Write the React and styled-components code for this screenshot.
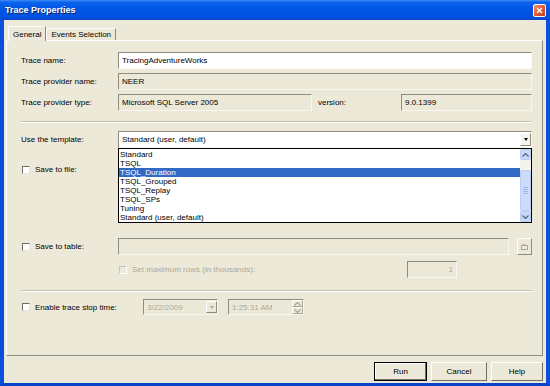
import styled, { createGlobalStyle } from "styled-components";

const GlobalStyle = createGlobalStyle`
  html, body {
    margin: 0;
    padding: 0;
    background: #ece9d8;
  }
  body {
    font-family: "Liberation Sans", Arial, sans-serif;
    font-size: 8px;
    color: #000;
  }
`;

const Window = styled.div`
  width: 550px;
  height: 386px;
  display: flex;
  flex-direction: column;
  background: #ece9d8;
  overflow: hidden;
`;

const TitleBar = styled.div`
  height: 20px;
  flex: none;
  display: flex;
  align-items: center;
  justify-content: space-between;
  padding: 0 4px 0 5px;
  background: linear-gradient(
    to bottom,
    #3d8bf7 0%,
    #0a62ec 12%,
    #0055e5 45%,
    #0052e0 85%,
    #0a45c8 100%
  );
`;

const TitleText = styled.span`
  color: #fff;
  font-size: 9px;
  font-weight: bold;
  text-shadow: 1px 1px 0 #0a246a;
`;

const CloseButton = styled.div`
  width: 13px;
  height: 13px;
  box-sizing: border-box;
  border: 1px solid #fff;
  border-radius: 2px;
  background: linear-gradient(135deg, #f0957a 0%, #e15a2f 50%, #c2401c 100%);
  display: flex;
  align-items: center;
  justify-content: center;
`;

const Body = styled.div`
  flex: 1;
  display: flex;
  flex-direction: column;
  border-left: 4px solid #0a50dc;
  border-right: 4px solid #0a50dc;
  border-bottom: 3px solid #0a45c8;
  padding: 6px 3px 0 2px;
  min-height: 0;
`;

const TabStrip = styled.div`
  height: 14px;
  flex: none;
  display: flex;
  align-items: flex-end;
  padding-left: 2px;
  position: relative;
  z-index: 1;
`;

const Tab = styled.div`
  box-sizing: border-box;
  height: ${(p) => (p.$active ? "15px" : "12px")};
  margin-bottom: ${(p) => (p.$active ? "-1px" : "0")};
  padding: 0 4px;
  display: flex;
  align-items: center;
  background: #ece9d8;
  border-left: 1px solid #fff;
  border-top: 1px solid #fff;
  border-right: 1px solid #8a877a;
  color: #000;
`;

const Panel = styled.div`
  flex: 1;
  display: flex;
  flex-direction: column;
  border: 1px solid;
  border-color: #fff #8f8d82 #8f8d82 #fff;
  padding: 11px 10px 0 14px;
  min-height: 0;
`;

const Row = styled.div`
  height: ${(p) => p.$h || 17}px;
  margin-top: ${(p) => p.$mt || 0}px;
  display: flex;
  align-items: center;
  flex: none;
`;

const Label = styled.div`
  width: ${(p) => p.$w || 97}px;
  flex: none;
  color: ${(p) => (p.$disabled ? "#aca899" : "#000")};
  white-space: nowrap;
`;

const Field = styled.div`
  box-sizing: border-box;
  height: 100%;
  width: ${(p) => (p.$w ? `${p.$w}px` : "auto")};
  flex: ${(p) => (p.$w ? "none" : "1")};
  display: flex;
  align-items: center;
  justify-content: ${(p) => (p.$right ? "flex-end" : "flex-start")};
  padding: 0 3px;
  background: ${(p) => (p.$white ? "#fff" : "#ece9d8")};
  color: ${(p) => (p.$grey ? "#aca899" : "#000")};
  border: 1px solid;
  border-color: #8f8d82 #f8f7f2 #f8f7f2 #8f8d82;
  position: relative;
  white-space: nowrap;
`;

const Separator = styled.div`
  height: 0;
  border-top: 1px solid #c5c2b2;
  border-bottom: 1px solid #fff;
  margin-top: ${(p) => p.$mt}px;
  flex: none;
`;

const ComboWrap = styled.div`
  flex: 1;
  height: 100%;
  position: relative;
`;

const DropButton = styled.div`
  position: absolute;
  right: 1px;
  top: 2px;
  bottom: 2px;
  width: 11px;
  box-sizing: border-box;
  background: ${(p) => (p.$disabled ? "#ece9d8" : "#f4f3ee")};
  border: 1px solid;
  border-color: #fff #8f8d82 #8f8d82 #fff;
  display: flex;
  align-items: center;
  justify-content: center;
`;

const Arrow = styled.div`
  width: 0;
  height: 0;
  border-left: 2.5px solid transparent;
  border-right: 2.5px solid transparent;
  border-top: 3px solid ${(p) => (p.$disabled ? "#aca899" : "#000")};
`;

const DropList = styled.div`
  position: absolute;
  top: 100%;
  left: 0;
  right: 0;
  height: 75px;
  box-sizing: border-box;
  background: #fff;
  border: 1px solid #000;
  display: flex;
  z-index: 5;
`;

const Items = styled.div`
  flex: 1;
  padding-top: 1px;
`;

const Item = styled.div`
  height: 9px;
  line-height: 9px;
  padding-left: 1px;
  background: ${(p) => (p.$selected ? "#316ac5" : "transparent")};
  color: ${(p) => (p.$selected ? "#fff" : "#000")};
  white-space: nowrap;
`;

const ScrollBar = styled.div`
  width: 11px;
  flex: none;
  display: flex;
  flex-direction: column;
  background: #f4f3ee;
`;

const ScrollBtn = styled.div`
  height: 11px;
  box-sizing: border-box;
  border: 1px solid #b9cdf8;
  border-radius: 2px;
  background: #c8d8fb;
  display: flex;
  align-items: center;
  justify-content: center;
  flex: none;
`;

const ScrollTrack = styled.div`
  flex: 1;
  display: flex;
  flex-direction: column;
  padding-top: 10px;
`;

const Thumb = styled.div`
  flex: 1;
  border: 1px solid #b9cdf8;
  border-radius: 2px;
  background: #cddbfb;
  display: flex;
  flex-direction: column;
  align-items: center;
  justify-content: center;
  gap: 1px;
`;

const Grip = styled.div`
  width: 5px;
  height: 1px;
  background: #9fb7ee;
`;

const Check = styled.div`
  width: 8px;
  height: 8px;
  box-sizing: border-box;
  flex: none;
  margin: 0 5px 0 1px;
  background: ${(p) => (p.$disabled ? "#ece9d8" : "#fff")};
  border: 1px solid;
  border-color: ${(p) =>
    p.$disabled ? "#c9c6b8 #fff #fff #c9c6b8" : "#6f6d64 #e8e6dc #e8e6dc #6f6d64"};
`;

const CheckLabel = styled.div`
  display: flex;
  align-items: center;
  width: ${(p) => (p.$w ? `${p.$w}px` : "auto")};
  flex: none;
  color: ${(p) => (p.$disabled ? "#aca899" : "#000")};
  white-space: nowrap;
`;

const SmallButton = styled.div`
  width: 15px;
  height: 100%;
  box-sizing: border-box;
  flex: none;
  margin-left: 8px;
  border: 1px solid;
  border-color: #fff #8f8d82 #8f8d82 #fff;
  display: flex;
  align-items: center;
  justify-content: center;
`;

const Spinner = styled.div`
  position: absolute;
  right: 1px;
  top: 1px;
  bottom: 1px;
  width: 11px;
  display: flex;
  flex-direction: column;
`;

const SpinHalf = styled.div`
  flex: 1;
  border: 1px solid;
  border-color: #fff #aca899 #aca899 #fff;
  display: flex;
  align-items: center;
  justify-content: center;
`;

const Footer = styled.div`
  height: 19px;
  flex: none;
  display: flex;
  justify-content: flex-end;
  gap: 4px;
  padding: 6px 0 2px;
`;

const Button = styled.div`
  width: ${(p) => p.$w}px;
  box-sizing: border-box;
  display: flex;
  align-items: center;
  justify-content: center;
  background: #ece9d8;
  border: 1px solid;
  border-color: #fff #6f6d64 #6f6d64 #fff;
  outline: ${(p) => (p.$default ? "1px solid #000" : "none")};
  outline-offset: -1px;
  box-shadow: ${(p) =>
    p.$default ? "inset -1px -1px 0 #6f6d64, inset 1px 1px 0 #fff" : "none"};
`;

const templates = [
  "Standard",
  "TSQL",
  "TSQL_Duration",
  "TSQL_Grouped",
  "TSQL_Replay",
  "TSQL_SPs",
  "Tuning",
  "Standard (user, default)",
];

const TinyArrow = ({ up, color = "#4d6185" }) => (
  <svg width="7" height="4" viewBox="0 0 7 4">
    <path
      d={up ? "M0.5 3.5 L3.5 0.5 L6.5 3.5" : "M0.5 0.5 L3.5 3.5 L6.5 0.5"}
      fill="none"
      stroke={color}
      strokeWidth="1.2"
    />
  </svg>
);

export default function App() {
  return (
    <>
      <GlobalStyle />
      <Window>
        <TitleBar>
          <TitleText>Trace Properties</TitleText>
          <CloseButton>
            <svg width="7" height="7" viewBox="0 0 7 7">
              <path d="M1 1 L6 6 M6 1 L1 6" stroke="#fff" strokeWidth="1.4" />
            </svg>
          </CloseButton>
        </TitleBar>
        <Body>
          <TabStrip>
            <Tab $active>General</Tab>
            <Tab>Events Selection</Tab>
          </TabStrip>
          <Panel>
            <Row>
              <Label>Trace name:</Label>
              <Field $white>TracingAdventureWorks</Field>
            </Row>
            <Row $mt={4}>
              <Label>Trace provider name:</Label>
              <Field>NEER</Field>
            </Row>
            <Row $mt={4}>
              <Label>Trace provider type:</Label>
              <Field $w={194}>Microsoft SQL Server 2005</Field>
              <Label $w={89} style={{ paddingLeft: 6, boxSizing: "border-box" }}>
                version:
              </Label>
              <Field>9.0.1399</Field>
            </Row>
            <Separator $mt={10} />
            <Row $mt={8}>
              <Label>Use the template:</Label>
              <ComboWrap>
                <Field $white>Standard (user, default)</Field>
                <DropButton>
                  <Arrow />
                </DropButton>
                <DropList>
                  <Items>
                    {templates.map((t) => (
                      <Item key={t} $selected={t === "TSQL_Duration"}>
                        {t}
                      </Item>
                    ))}
                  </Items>
                  <ScrollBar>
                    <ScrollBtn>
                      <TinyArrow up />
                    </ScrollBtn>
                    <ScrollTrack>
                      <Thumb>
                        <Grip />
                        <Grip />
                        <Grip />
                        <Grip />
                      </Thumb>
                    </ScrollTrack>
                    <ScrollBtn>
                      <TinyArrow />
                    </ScrollBtn>
                  </ScrollBar>
                </DropList>
              </ComboWrap>
            </Row>
            <Row $mt={13}>
              <CheckLabel>
                <Check />
                Save to file:
              </CheckLabel>
            </Row>
            <Row $mt={60}>
              <CheckLabel $w={97}>
                <Check />
                Save to table:
              </CheckLabel>
              <Field />
              <SmallButton>
                <svg width="7" height="6" viewBox="0 0 7 6">
                  <rect x="0.5" y="1.5" width="6" height="4" fill="none" stroke="#aca899" />
                  <path d="M1 1.5 L2 0.5 L4 0.5" stroke="#aca899" fill="none" />
                </svg>
              </SmallButton>
            </Row>
            <Row $mt={6}>
              <div style={{ width: 97, flex: "none" }} />
              <CheckLabel $disabled $w={289}>
                <Check $disabled />
                Set maximum rows (in thousands):
              </CheckLabel>
              <Field $w={50} $right $grey>
                1
              </Field>
            </Row>
            <Separator $mt={12} />
            <Row $mt={7} $h={16}>
              <CheckLabel $w={122}>
                <Check />
                Enable trace stop time:
              </CheckLabel>
              <ComboWrap style={{ flex: "none", width: 75 }}>
                <Field $grey>3/22/2009</Field>
                <DropButton $disabled>
                  <Arrow $disabled />
                </DropButton>
              </ComboWrap>
              <ComboWrap style={{ flex: "none", width: 76, marginLeft: 10 }}>
                <Field $grey>1:25:31 AM</Field>
                <Spinner>
                  <SpinHalf>
                    <TinyArrow up color="#aca899" />
                  </SpinHalf>
                  <SpinHalf>
                    <TinyArrow color="#aca899" />
                  </SpinHalf>
                </Spinner>
              </ComboWrap>
            </Row>
          </Panel>
          <Footer>
            <Button $w={53} $default>
              Run
            </Button>
            <Button $w={56}>Cancel</Button>
            <Button $w={52}>Help</Button>
          </Footer>
        </Body>
      </Window>
    </>
  );
}
